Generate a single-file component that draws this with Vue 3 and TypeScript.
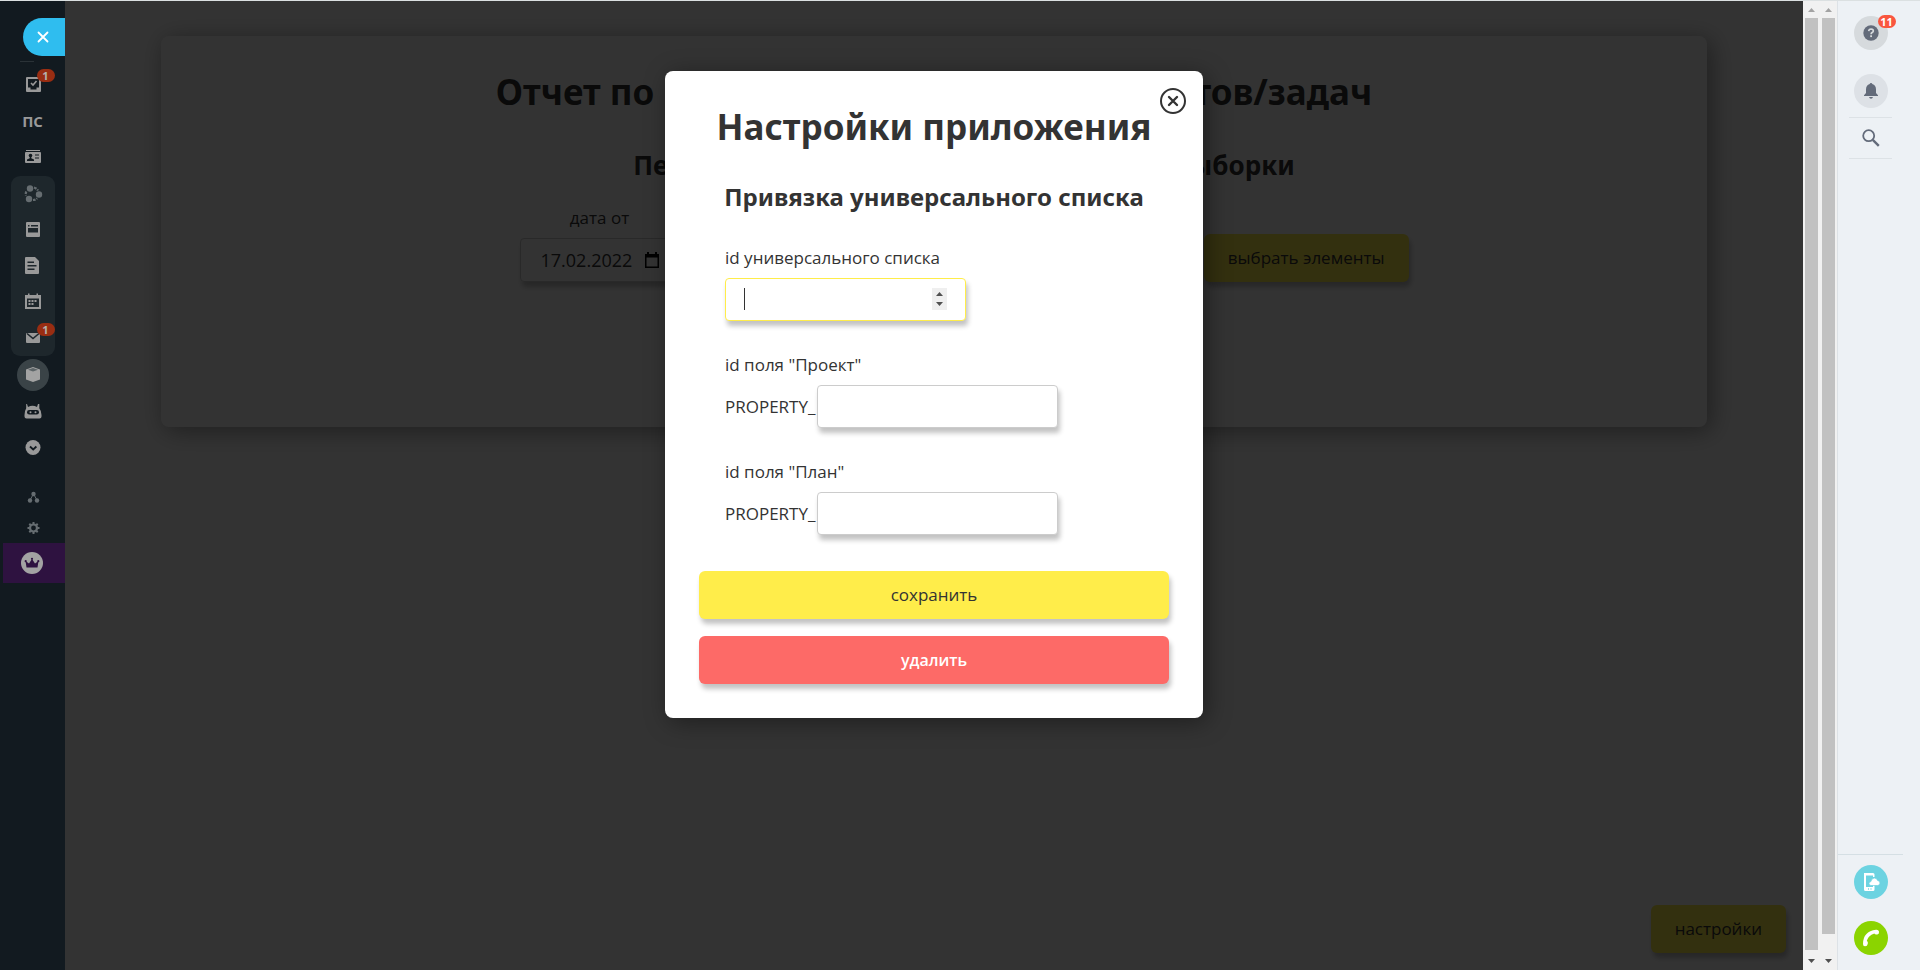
<script setup lang="ts">
import { onMounted, ref } from 'vue'

const listId = ref('')
const projectField = ref('')
const planField = ref('')
const dateFrom = ref('17.02.2022')
const dateTo = ref('17.02.2022')
const listInput = ref<HTMLInputElement | null>(null)

onMounted(() => listInput.value?.focus())
</script>

<template>
  <div class="page">
    <nav class="sidebar" aria-label="Меню">
      <button class="slider-close" type="button" aria-label="Закрыть">
        <svg width="12" height="12" viewBox="0 0 12 12"><path d="M1.5 1.5l9 9M10.5 1.5l-9 9" stroke="#fff" stroke-width="1.8" stroke-linecap="round" /></svg>
      </button>
      <hr class="side-line">
      <a class="item" href="#" aria-label="Задачи">
        <svg class="ic" viewBox="0 0 24 24">
          <rect x="5" y="5" width="15" height="15" rx="1" />
          <path class="cut" d="M7 7h11v8.500h-2.500v2h-6v-2H7z" />
          <path class="ln" d="M10 11l2 2 3.500-4" />
        </svg>
        <span class="badge">1</span>
      </a>
      <a class="item item-text" href="#">ПС</a>
      <a class="item" href="#" aria-label="Контакты">
        <svg class="ic" viewBox="0 0 24 24">
          <rect x="5" y="5" width="14" height="1" />
          <rect x="4" y="7" width="16" height="11" rx="1" />
          <circle class="cut" cx="9.500" cy="10.500" r="1.800" />
          <path class="cut" d="M8.700 11h1.600v2.300l2.700 1.200V16H6v-1.500l2.700-1.200zM14 9.500h4v1h-4zM14 12.500h4v1h-4z" />
        </svg>
      </a>
      <div class="group">
        <a class="item" href="#" aria-label="Процессы">
          <svg class="ic dim" viewBox="0 0 24 24">
            <circle cx="9" cy="6.500" r="3.200" /><circle cx="18" cy="12.500" r="3.200" /><circle cx="8" cy="17" r="3.200" />
            <path d="M13 5.500q3 1 4 3M5.300 9.500q-.9 2-.3 4M12 18q2.500 0 4-1.800" fill="none" stroke="#666d71" stroke-width="2.200" stroke-dasharray="2.500 1" />
          </svg>
        </a>
        <a class="item" href="#" aria-label="Сайты">
          <svg class="ic" viewBox="0 0 24 24">
            <rect x="5" y="4" width="14" height="15" rx="1" />
            <path class="cut2" d="M7 7h1.500v1.500H7zM10 7h7v1.500h-7zM7 10h10v4.500H7z" />
          </svg>
        </a>
        <a class="item" href="#" aria-label="Документы">
          <svg class="ic" viewBox="0 0 24 24">
            <path d="M5 3h9l4 4v12a1 1 0 0 1-1 1H5a1 1 0 0 1-1-1V4a1 1 0 0 1 1-1z" />
            <path class="cut2" d="M6.500 7.500h6.500V9H6.500zM6.500 11h9v1.500h-9zM6.500 14.500h7V16h-7z" />
          </svg>
        </a>
        <a class="item" href="#" aria-label="Календарь">
          <svg class="ic" viewBox="0 0 24 24">
            <path d="M4 5h3V3.500h1.500V5h7V3.500H17V5h3v14H4z" />
            <path class="cut2" d="M6 8.500h12V17H6z" />
            <path d="M10.500 10h2v2h-2zM13.500 10h2v2h-2zM7.500 13h2v2h-2zM10.500 13h2v2h-2zM7.500 10h2v2h-2z" />
          </svg>
        </a>
        <a class="item" href="#" aria-label="Почта">
          <svg class="ic" viewBox="0 0 24 24">
            <rect x="5" y="7" width="14" height="10" rx="1" />
            <path d="M6 7.500l6 5 6-5" fill="none" stroke="#1e272c" stroke-width="1.600" />
          </svg>
          <span class="badge">1</span>
        </a>
      </div>
      <a class="item apps" href="#" aria-label="Приложения">
        <span class="round">
          <svg class="ic" viewBox="0 0 24 24">
            <path d="M12 4l7 2.500v10L12 19l-7-2.500v-10z" />
            <path d="M12 5l5 1.800L12 8.500 7 6.800z" fill="#5d6568" />
          </svg>
        </span>
      </a>
      <a class="item" href="#" aria-label="Роботы">
        <svg class="ic" viewBox="0 0 24 24">
          <path d="M6 5l1 3q4.500-2.500 9 0l1-3h1.300v4.300Q20.500 12 20.500 16v1.500a2 2 0 0 1-2 2H5.500a2 2 0 0 1-2-2V16Q3.500 12 5.200 9.300V5z" />
          <rect class="cut" x="6" y="11" width="12" height="4.500" rx="2.200" />
          <circle cx="9.500" cy="13.200" r="1" /><circle cx="14.500" cy="13.200" r="1" />
        </svg>
      </a>
      <a class="item" href="#" aria-label="Ещё">
        <svg class="ic" viewBox="0 0 24 24">
          <circle cx="12" cy="12.500" r="7.500" />
          <path d="M9 11.500l3.200 3 3.200-3" fill="none" stroke="#121a20" stroke-width="1.800" />
        </svg>
      </a>
      <div class="side-small">
        <a class="item" href="#" aria-label="Структура">
          <svg class="ic dim" viewBox="0 0 24 24">
            <circle cx="12.500" cy="8" r="2.200" /><circle cx="9" cy="14.500" r="2.200" /><circle cx="16" cy="14.500" r="2.200" />
            <path d="M9 14l3.500-6 3.500 6" fill="none" stroke="#666d71" />
          </svg>
        </a>
        <a class="item" href="#" aria-label="Параметры">
          <svg class="ic dim" viewBox="0 0 24 24">
            <circle cx="12.500" cy="12" r="3.500" fill="none" stroke="#666d71" stroke-width="2.200" />
            <path d="M12.500 6v2M12.500 16v2M6.500 12h2M16.500 12h2M8.300 7.800l1.400 1.400M15.300 14.800l1.400 1.400M8.300 16.200l1.400-1.400M15.300 9.200l1.400-1.400" stroke="#666d71" stroke-width="2" />
          </svg>
        </a>
      </div>
      <a class="tariff" href="#" aria-label="Тариф">
        <svg width="22" height="22" viewBox="0 0 22 22">
          <circle cx="11" cy="11" r="11" fill="#a3a3a3" />
          <path d="M5.500 15.500L4.500 9l3.500 2.500L11 7l3 4.500L17.500 9l-1 6.500z" fill="#2e1240" />
          <circle cx="11" cy="6.800" r="1.100" fill="#2e1240" /><circle cx="4.700" cy="9.200" r="1.100" fill="#2e1240" /><circle cx="17.300" cy="9.200" r="1.100" fill="#2e1240" />
        </svg>
      </a>
    </nav>

    <main class="content">
      <section class="card">
        <h1>Отчет по исполнению графиков проектов/задач</h1>
        <div class="selection">
          <h2>Период и дополнительные условия для выборки</h2>
          <div class="filters">
            <div class="date-field">
              <label for="date-from">дата от</label>
              <div class="date-box">
                <input id="date-from" v-model="dateFrom" type="text">
                <svg width="14" height="16" viewBox="0 0 14 16"><path d="M0 2h2V0h2v2h6V0h2v2h2v14H0zM1.500 5.500v9h11v-9z" fill="#000" fill-rule="evenodd" /></svg>
              </div>
            </div>
            <div class="date-field">
              <label for="date-to">дата до</label>
              <div class="date-box">
                <input id="date-to" v-model="dateTo" type="text">
                <svg width="14" height="16" viewBox="0 0 14 16"><path d="M0 2h2V0h2v2h6V0h2v2h2v14H0zM1.500 5.500v9h11v-9z" fill="#000" fill-rule="evenodd" /></svg>
              </div>
            </div>
            <button class="btn btn-inline pick" type="button">выбрать элементы</button>
          </div>
        </div>
      </section>
      <button class="btn btn-inline settings" type="button">настройки</button>

      <div class="overlay">
        <form class="modal" role="dialog" aria-labelledby="modal-title" @submit.prevent>
          <button class="modal-close" type="button" aria-label="Закрыть окно">
            <svg width="26" height="26" viewBox="0 0 26 26" fill="none" stroke="#333" stroke-width="2">
              <circle cx="13" cy="13" r="12" /><path d="M9 9l8 8M17 9l-8 8" stroke-width="2.400" stroke-linecap="round" />
            </svg>
          </button>
          <h1 id="modal-title">Настройки приложения</h1>
          <h2>Привязка универсального списка</h2>
          <div class="fields">
            <div class="field">
              <label for="list-id">id универсального списка</label>
              <div class="number-box">
                <input id="list-id" ref="listInput" v-model="listId" class="box number" type="number">
                <span v-if="!listId" class="caret"></span>
                <svg class="spinner" viewBox="0 0 15 22">
                  <rect width="15" height="22" fill="#efefef" />
                  <path d="M4 8h7L7.500 4zM4 14h7l-3.500 4z" fill="#505050" />
                </svg>
              </div>
            </div>
            <div class="field">
              <label for="project-id">id поля "Проект"</label>
              <div class="prefixed"><span>PROPERTY_</span><input id="project-id" v-model="projectField" class="box" type="text"></div>
            </div>
            <div class="field">
              <label for="plan-id">id поля "План"</label>
              <div class="prefixed"><span>PROPERTY_</span><input id="plan-id" v-model="planField" class="box" type="text"></div>
            </div>
          </div>
          <div class="actions">
            <button class="btn" type="submit">сохранить</button>
            <button class="btn danger" type="button">удалить</button>
          </div>
        </form>
      </div>
    </main>

    <div class="scroll" aria-hidden="true">
      <svg class="arrow" viewBox="0 0 17 17"><path d="M5 11h7L8.500 7z" fill="#a3a3a3" /></svg>
      <div class="thumb"></div>
      <svg class="arrow" viewBox="0 0 17 17"><path d="M5 6h7l-3.500 4z" fill="#505050" /></svg>
    </div>
    <div class="scroll outer" aria-hidden="true">
      <svg class="arrow" viewBox="0 0 17 17"><path d="M5 11h7L8.500 7z" fill="#a3a3a3" /></svg>
      <div class="thumb"></div>
      <svg class="arrow" viewBox="0 0 17 17"><path d="M5 6h7l-3.500 4z" fill="#505050" /></svg>
    </div>

    <aside class="right">
      <button class="circle help" type="button" aria-label="Помощь">
        <svg width="16" height="16" viewBox="0 0 16 16">
          <circle cx="8" cy="8" r="7.700" fill="#636b7a" />
          <path d="M5.700 6.200q.2-2.200 2.400-2.200 2.200.1 2.200 1.900 0 1-1.200 1.700-1 .6-1 1.600" fill="none" stroke="#d6dadd" stroke-width="1.700" />
          <rect x="7.200" y="10.300" width="1.800" height="1.800" fill="#d6dadd" />
        </svg>
        <span class="badge">11</span>
      </button>
      <button class="circle bell" type="button" aria-label="Уведомления">
        <svg width="14" height="16" viewBox="0 0 14 16" fill="#636b7a"><path d="M7 0q1.200 0 1.300 1.100Q12 2.200 12 6.500V10l2 2.300V13H0v-.7L2 10V6.500Q2 2.200 5.700 1.100 5.800 0 7 0zM5 14h4q-.5 1.800-2 1.800T5 14z" /></svg>
      </button>
      <button class="search" type="button" aria-label="Поиск">
        <svg width="18" height="18" viewBox="0 0 18 18" fill="none" stroke="#636b7a"><circle cx="6.700" cy="6.700" r="5.500" stroke-width="1.800" /><path d="M10.800 10.800l6 6" stroke-width="2.400" /></svg>
      </button>
      <div class="right-bottom">
        <button class="circle mobile" type="button" aria-label="Мобильное приложение">
          <svg width="18" height="18" viewBox="0 0 18 18">
            <path d="M2 0h9q1.500 0 1.500 1.500V4H11V2.500H4V14h7v-2h1.500v4.500Q12.500 18 11 18H3.500Q2 18 2 16.500z" fill="#fff" />
            <path d="M9 12.500q-2-.2-2-2 .1-1.800 1.900-1.900Q9.500 5 12.500 5q2.500.1 3.100 2.500 2.400.3 2.400 2.600-.1 2.200-2.300 2.400z" fill="#fff" stroke="#6cd3e1" stroke-width=".7" />
            <path d="M6.500 15.300v1.400M9 15.300v1.400" stroke="#6cd3e1" />
          </svg>
        </button>
        <button class="circle phone" type="button" aria-label="Телефон">
          <svg width="18" height="18" viewBox="0 0 18 18"><path d="M1 15Q1 2.500 14 .8q2.500-.3 3 1.700.5 2.500-1.600 2.900-2.400.5-3.100-1Q6 6.500 4.800 11.800q1.500.8 1 2.900-.5 2.500-2.600 2.600Q1 17.500 1 15z" fill="#fff" /></svg>
        </button>
      </div>
    </aside>
  </div>
</template>

<style>
body {
  background: #fff;
}
</style>

<style scoped>
* {
  box-sizing: border-box;
}

.page {
  display: flex;
  height: 100vh;
  border-top: 1px solid #dbe0e1;
  font: 400 17px/24px "Open Sans", sans-serif;
  color: #333;
}

h1,
h2 {
  margin: 0;
  font-family: "Noto Sans", sans-serif;
  font-weight: 700;
  text-align: center;
}

h1 {
  font-size: 35px;
  line-height: 48px;
}

button {
  border: 0;
  padding: 0;
  font: inherit;
  cursor: pointer;
}

input {
  font: inherit;
  color: inherit;
}

/* left menu */
.sidebar {
  display: flex;
  flex-direction: column;
  align-items: center;
  flex: none;
  width: 65px;
  padding-top: 17px;
  background: #121a20;
}

.slider-close {
  display: flex;
  align-items: center;
  align-self: flex-end;
  width: 42px;
  height: 38px;
  padding-left: 14px;
  border-radius: 19px 0 0 19px;
  background: #2fbdef;
}

.side-line {
  width: 14px;
  height: 1px;
  margin: 5px 12px 4px 0;
  border: 0;
  background: #2a3237;
}

.item {
  position: relative;
  display: flex;
  align-items: center;
  justify-content: center;
  width: 44px;
  height: 36px;
  color: #999;
  text-decoration: none;
}

.item-text {
  margin-top: 1px;
  font-size: 15px;
  font-weight: 700;
}

.ic {
  width: 24px;
  height: 24px;
  fill: #999;
}

.dim {
  fill: #666d71;
}

.cut {
  fill: #121a20;
}

.cut2 {
  fill: #1e272c;
}

.ln {
  fill: none;
  stroke: #999;
  stroke-width: 1.6px;
}

.badge {
  position: absolute;
  top: 3px;
  right: 0;
  width: 18px;
  height: 13px;
  border-radius: 7px;
  background: #992d12;
  color: #b5b0ae;
  font-size: 11px;
  line-height: 13px;
  font-weight: 700;
  text-align: center;
}

.group {
  margin-top: 1px;
  border-radius: 9px;
  background: #1e272c;
}

.apps {
  margin-top: 1px;
}

.round {
  display: grid;
  place-items: center;
  width: 32px;
  height: 32px;
  border-radius: 50%;
  background: #3a4347;
}

.round .ic {
  fill: #a3a3a3;
}

.side-small {
  margin-top: 18px;
}

.side-small .item {
  height: 30px;
}

.tariff {
  display: flex;
  align-items: center;
  align-self: stretch;
  height: 40px;
  margin-left: 3px;
  padding-left: 18px;
  background: #2e1240;
}

/* report page */
.content {
  position: relative;
  flex: 1;
  min-width: 0;
  padding: 35px 96px;
}

.card {
  min-height: 391px;
  padding: 32px 24px;
  border-radius: 8px;
  background: #fff;
  box-shadow: 4px 4px 24px rgba(0, 0, 0, 0.4);
}

.selection {
  padding-left: 60px;
}

.card h2 {
  margin-top: 33px;
  font-size: 26px;
  line-height: 32px;
}

.filters {
  display: flex;
  align-items: flex-end;
  gap: 32px;
  max-width: 889px;
  margin: 25px auto 0;
}

.date-field {
  display: flex;
  flex-direction: column;
  gap: 8px;
  text-align: center;
}

.date-box {
  display: flex;
  align-items: center;
  width: 160px;
  height: 44px;
  padding: 0 20px;
  border: 1px solid #ccc;
  border-radius: 4px;
  box-shadow: 2px 5px 5px rgba(0, 0, 0, 0.24);
}

.date-box input {
  flex: 1;
  min-width: 0;
  padding: 0;
  border: 0;
  background: none;
  font-size: 18px;
}

.btn {
  height: 48px;
  border-radius: 6px;
  background: #ffed4a;
  color: #333;
  box-shadow: 2px 5px 5px rgba(0, 0, 0, 0.24);
}

.btn-inline {
  padding: 0 24px;
}

.pick {
  margin-left: auto;
}

.settings {
  position: absolute;
  right: 17px;
  bottom: 17px;
}

/* dialog */
.overlay {
  position: absolute;
  inset: 0;
  display: flex;
  align-items: flex-start;
  justify-content: center;
  padding-top: 70px;
  background: rgba(0, 0, 0, 0.8);
}

.modal {
  position: relative;
  width: 538px;
  padding: 32px 34px 34px;
  border-radius: 8px;
  background: #fff;
  box-shadow: 4px 4px 24px rgba(0, 0, 0, 0.4);
}

.modal h2 {
  margin-top: 30px;
  font-size: 24px;
  line-height: 32px;
}

.modal-close {
  position: absolute;
  top: 17px;
  right: 17px;
  width: 26px;
  height: 26px;
  background: none;
}

.modal-close svg {
  display: block;
}

.fields {
  display: flex;
  flex-direction: column;
  gap: 32px;
  margin: 33px 26px 36px;
}

.field {
  display: flex;
  flex-direction: column;
  align-items: flex-start;
  gap: 8px;
}

.prefixed {
  display: flex;
  align-items: center;
  gap: 2px;
}

.box {
  display: block;
  width: 241px;
  height: 43px;
  padding: 0 18px;
  border: 1px solid #ccc;
  border-radius: 4px;
  outline: 0;
  background: #fff;
  box-shadow: 2px 5px 5px rgba(0, 0, 0, 0.24);
}

.number-box {
  position: relative;
}

.number {
  border-color: #ffed4a;
  caret-color: transparent;
  appearance: textfield;
}

.caret {
  position: absolute;
  top: 10px;
  left: 19px;
  width: 1px;
  height: 22px;
  background: #333;
}

.spinner {
  position: absolute;
  top: 10px;
  right: 19px;
  width: 15px;
  height: 22px;
}

.actions {
  display: flex;
  flex-direction: column;
  gap: 17px;
}

.danger {
  background: #fd6a67;
  color: #fff;
  font-size: 16px;
  font-weight: 600;
}

/* scroll bars */
.scroll {
  display: flex;
  flex-direction: column;
  flex: none;
  width: 17px;
  background: #f1f1f1;
}

.arrow {
  flex: none;
  width: 17px;
  height: 17px;
}

.thumb {
  flex: 1;
  margin: 0 2px 3px;
  background: #c1c1c1;
}

.outer .thumb {
  margin-bottom: 19px;
}

/* right panel */
.right {
  display: flex;
  flex-direction: column;
  align-items: center;
  flex: none;
  width: 83px;
  padding: 15px 17px 0 0;
  border-left: 1px solid #dde2e6;
  background: #edf1f5;
}

.circle {
  position: relative;
  display: grid;
  place-items: center;
  width: 34px;
  height: 34px;
  border-radius: 50%;
}

.help {
  background: #d6dadd;
}

.help .badge {
  top: -1px;
  right: -8px;
  background: #f9563f;
  color: #fff;
}

.bell {
  margin-top: 24px;
  background: #dde1e6;
}

.search {
  display: grid;
  place-items: center;
  width: 43px;
  height: 42px;
  margin-top: 9px;
  border-top: 1px solid #dde2e6;
  border-bottom: 1px solid #dde2e6;
  background: none;
}

.right-bottom {
  display: flex;
  flex-direction: column;
  align-items: center;
  gap: 22px;
  align-self: stretch;
  margin-top: auto;
  padding: 10px 0 15px;
  border-top: 1px solid #d5dfe4;
}

.mobile {
  background: #6cd3e1;
}

.phone {
  background: #8bd400;
}
</style>
